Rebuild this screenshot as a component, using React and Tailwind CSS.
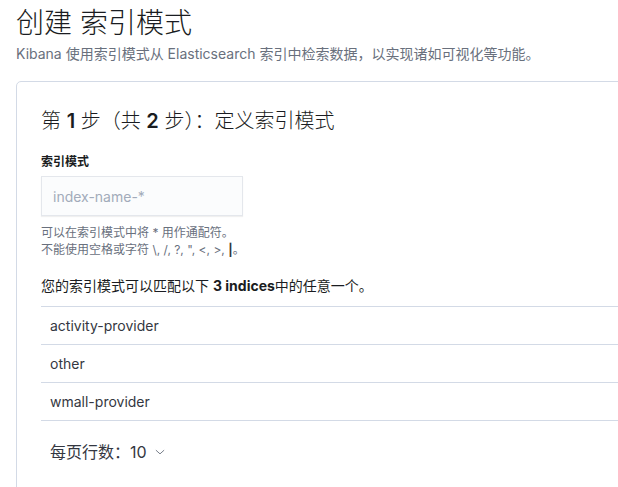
import React from 'react';

const indices = ['activity-provider', 'other', 'wmall-provider'];

function ChevronDown() {
  return (
    <svg width="12" height="12" viewBox="0 0 16 16" className="text-[#69707d]">
      <path d="M2.5 5.5l5.5 5 5.5-5" fill="none" stroke="currentColor" strokeWidth="1.2" />
    </svg>
  );
}

export default function App() {
  return (
    <div
      className="w-full h-screen overflow-hidden bg-white pl-4 pt-[6px] text-[#343741]"
      style={{ fontFamily: '"Inter", "Noto Sans CJK SC", sans-serif' }}
    >
      <h1 className="text-[28px] leading-[34px] text-[#1a1c21] font-light">创建 索引模式</h1>
      <p className="mt-[4px] text-[14px] leading-[20px] text-[#69707d] whitespace-nowrap">
        Kibana 使用索引模式从 Elasticsearch 索引中检索数据，以实现诸如可视化等功能。
      </p>

      {/* panel runs past the window edge */}
      <div className="mt-[17px] w-[680px] border border-[#d3dae6] rounded-[5px] p-6 pb-10 bg-white">
        <h2 className="text-[20px] leading-[30px] text-[#1a1c21] font-light whitespace-nowrap">
          第 <span className="font-semibold">1</span> 步（共 <span className="font-semibold">2</span> 步）：定义索引模式
        </h2>

        <label className="block mt-[17px] mb-[5px] text-[12px] leading-[18px] font-bold text-[#1a1c21]">
          索引模式
        </label>
        <div className="w-[202px] h-[40px] bg-[#fbfcfd] border border-[#e4e7ec] shadow-[0_1px_1px_rgba(0,0,0,0.06)] flex items-center px-[11px] text-[14px] text-[#a2abba]">
          index-name-*
        </div>

        <div className="mt-2 text-[12px] leading-[17px] text-[#69707d]">
          <div>可以在索引模式中将 * 用作通配符。</div>
          <div>
            不能使用空格或字符 \, /, ?, ", &lt;, &gt;, <span className="font-bold text-[#343741]">|</span>。
          </div>
        </div>

        <p className="mt-[18px] mb-[10px] text-[14px] leading-[20px] text-[#1a1c21]">
          您的索引模式可以匹配以下 <strong className="font-bold">3 indices</strong>中的任意一个。
        </p>

        <div className="border-t border-[#d3dae6]">
          {indices.map((name) => (
            <div key={name} className="h-[38px] border-b border-[#d3dae6] flex items-center px-[9px] text-[14px] text-[#343741]">
              {name}
            </div>
          ))}
        </div>

        <div className="mt-[20px] px-[9px] flex items-center gap-[7px] text-[16px] leading-[22px] text-[#343741]">
          <span>每页行数：10</span>
          <ChevronDown />
        </div>
      </div>
    </div>
  );
}
